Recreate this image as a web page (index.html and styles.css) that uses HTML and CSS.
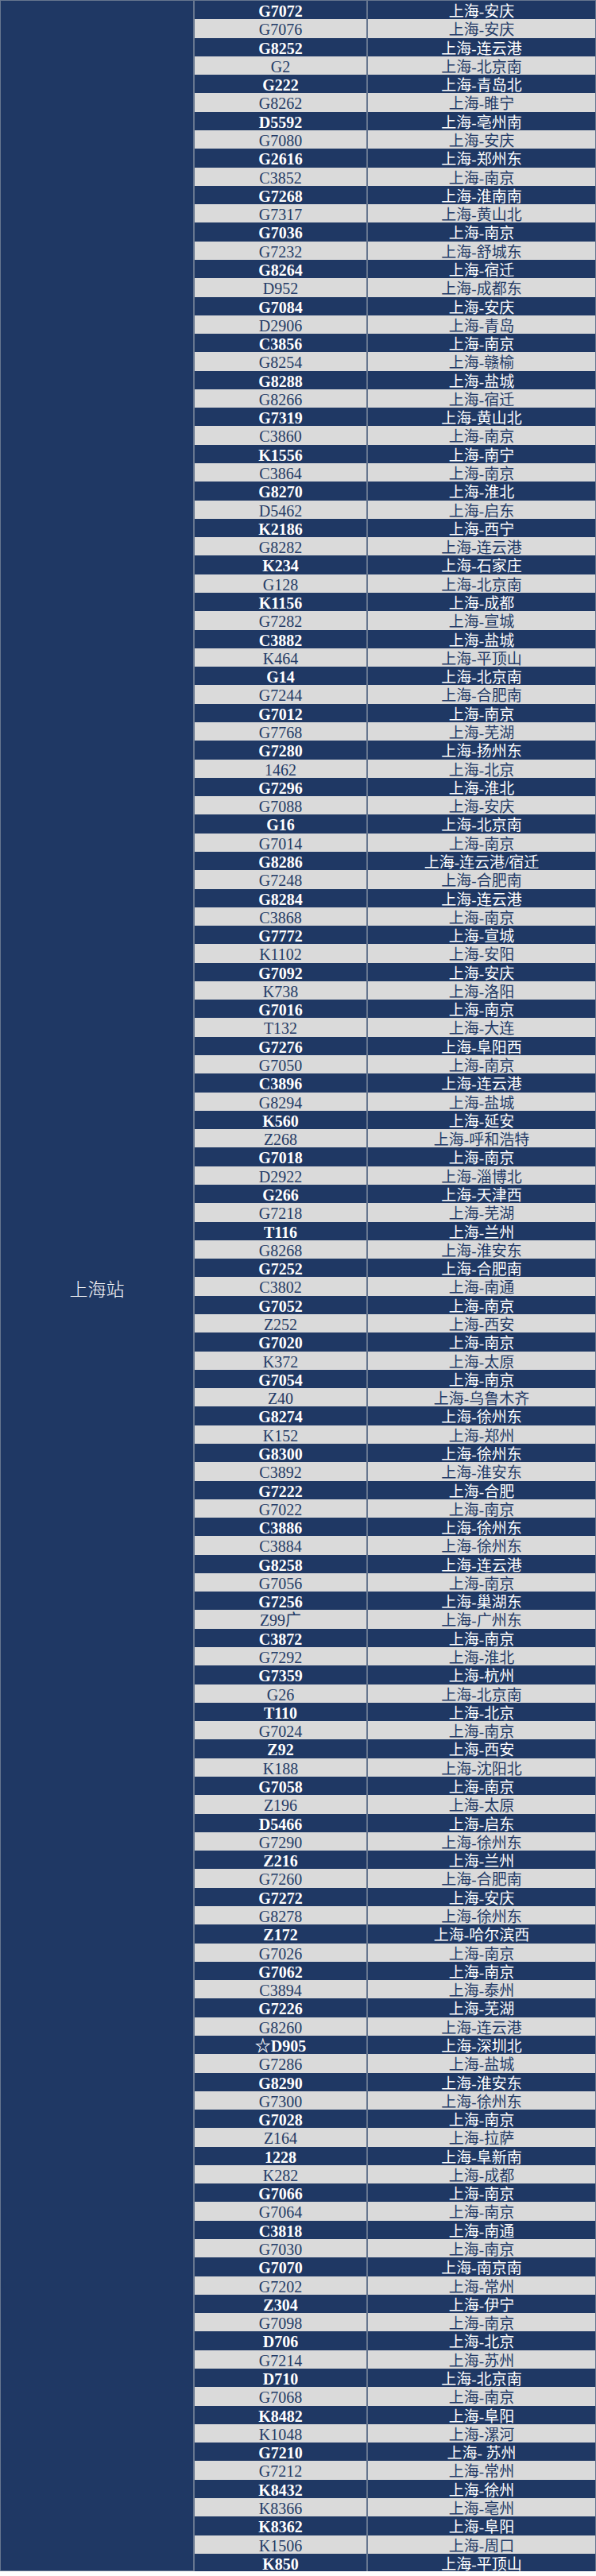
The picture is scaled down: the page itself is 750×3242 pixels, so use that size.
FILE: index.html
```html
<!DOCTYPE html>
<html lang="zh-CN">
<head>
<meta charset="utf-8">
<title>上海站</title>
<link rel="stylesheet" href="styles.css">
</head>
<body>
<div class="table">
  <div class="station">上海站</div>
  <div class="list">
    <div class="row dark"><div class="no">G7072</div><div class="route">上海-安庆</div></div>
    <div class="row light"><div class="no">G7076</div><div class="route">上海-安庆</div></div>
    <div class="row dark"><div class="no">G8252</div><div class="route">上海-连云港</div></div>
    <div class="row light"><div class="no">G2</div><div class="route">上海-北京南</div></div>
    <div class="row dark"><div class="no">G222</div><div class="route">上海-青岛北</div></div>
    <div class="row light"><div class="no">G8262</div><div class="route">上海-睢宁</div></div>
    <div class="row dark"><div class="no">D5592</div><div class="route">上海-亳州南</div></div>
    <div class="row light"><div class="no">G7080</div><div class="route">上海-安庆</div></div>
    <div class="row dark"><div class="no">G2616</div><div class="route">上海-郑州东</div></div>
    <div class="row light"><div class="no">C3852</div><div class="route">上海-南京</div></div>
    <div class="row dark"><div class="no">G7268</div><div class="route">上海-淮南南</div></div>
    <div class="row light"><div class="no">G7317</div><div class="route">上海-黄山北</div></div>
    <div class="row dark"><div class="no">G7036</div><div class="route">上海-南京</div></div>
    <div class="row light"><div class="no">G7232</div><div class="route">上海-舒城东</div></div>
    <div class="row dark"><div class="no">G8264</div><div class="route">上海-宿迁</div></div>
    <div class="row light"><div class="no">D952</div><div class="route">上海-成都东</div></div>
    <div class="row dark"><div class="no">G7084</div><div class="route">上海-安庆</div></div>
    <div class="row light"><div class="no">D2906</div><div class="route">上海-青岛</div></div>
    <div class="row dark"><div class="no">C3856</div><div class="route">上海-南京</div></div>
    <div class="row light"><div class="no">G8254</div><div class="route">上海-赣榆</div></div>
    <div class="row dark"><div class="no">G8288</div><div class="route">上海-盐城</div></div>
    <div class="row light"><div class="no">G8266</div><div class="route">上海-宿迁</div></div>
    <div class="row dark"><div class="no">G7319</div><div class="route">上海-黄山北</div></div>
    <div class="row light"><div class="no">C3860</div><div class="route">上海-南京</div></div>
    <div class="row dark"><div class="no">K1556</div><div class="route">上海-南宁</div></div>
    <div class="row light"><div class="no">C3864</div><div class="route">上海-南京</div></div>
    <div class="row dark"><div class="no">G8270</div><div class="route">上海-淮北</div></div>
    <div class="row light"><div class="no">D5462</div><div class="route">上海-启东</div></div>
    <div class="row dark"><div class="no">K2186</div><div class="route">上海-西宁</div></div>
    <div class="row light"><div class="no">G8282</div><div class="route">上海-连云港</div></div>
    <div class="row dark"><div class="no">K234</div><div class="route">上海-石家庄</div></div>
    <div class="row light"><div class="no">G128</div><div class="route">上海-北京南</div></div>
    <div class="row dark"><div class="no">K1156</div><div class="route">上海-成都</div></div>
    <div class="row light"><div class="no">G7282</div><div class="route">上海-宣城</div></div>
    <div class="row dark"><div class="no">C3882</div><div class="route">上海-盐城</div></div>
    <div class="row light"><div class="no">K464</div><div class="route">上海-平顶山</div></div>
    <div class="row dark"><div class="no">G14</div><div class="route">上海-北京南</div></div>
    <div class="row light"><div class="no">G7244</div><div class="route">上海-合肥南</div></div>
    <div class="row dark"><div class="no">G7012</div><div class="route">上海-南京</div></div>
    <div class="row light"><div class="no">G7768</div><div class="route">上海-芜湖</div></div>
    <div class="row dark"><div class="no">G7280</div><div class="route">上海-扬州东</div></div>
    <div class="row light"><div class="no">1462</div><div class="route">上海-北京</div></div>
    <div class="row dark"><div class="no">G7296</div><div class="route">上海-淮北</div></div>
    <div class="row light"><div class="no">G7088</div><div class="route">上海-安庆</div></div>
    <div class="row dark"><div class="no">G16</div><div class="route">上海-北京南</div></div>
    <div class="row light"><div class="no">G7014</div><div class="route">上海-南京</div></div>
    <div class="row dark"><div class="no">G8286</div><div class="route">上海-连云港/宿迁</div></div>
    <div class="row light"><div class="no">G7248</div><div class="route">上海-合肥南</div></div>
    <div class="row dark"><div class="no">G8284</div><div class="route">上海-连云港</div></div>
    <div class="row light"><div class="no">C3868</div><div class="route">上海-南京</div></div>
    <div class="row dark"><div class="no">G7772</div><div class="route">上海-宣城</div></div>
    <div class="row light"><div class="no">K1102</div><div class="route">上海-安阳</div></div>
    <div class="row dark"><div class="no">G7092</div><div class="route">上海-安庆</div></div>
    <div class="row light"><div class="no">K738</div><div class="route">上海-洛阳</div></div>
    <div class="row dark"><div class="no">G7016</div><div class="route">上海-南京</div></div>
    <div class="row light"><div class="no">T132</div><div class="route">上海-大连</div></div>
    <div class="row dark"><div class="no">G7276</div><div class="route">上海-阜阳西</div></div>
    <div class="row light"><div class="no">G7050</div><div class="route">上海-南京</div></div>
    <div class="row dark"><div class="no">C3896</div><div class="route">上海-连云港</div></div>
    <div class="row light"><div class="no">G8294</div><div class="route">上海-盐城</div></div>
    <div class="row dark"><div class="no">K560</div><div class="route">上海-延安</div></div>
    <div class="row light"><div class="no">Z268</div><div class="route">上海-呼和浩特</div></div>
    <div class="row dark"><div class="no">G7018</div><div class="route">上海-南京</div></div>
    <div class="row light"><div class="no">D2922</div><div class="route">上海-淄博北</div></div>
    <div class="row dark"><div class="no">G266</div><div class="route">上海-天津西</div></div>
    <div class="row light"><div class="no">G7218</div><div class="route">上海-芜湖</div></div>
    <div class="row dark"><div class="no">T116</div><div class="route">上海-兰州</div></div>
    <div class="row light"><div class="no">G8268</div><div class="route">上海-淮安东</div></div>
    <div class="row dark"><div class="no">G7252</div><div class="route">上海-合肥南</div></div>
    <div class="row light"><div class="no">C3802</div><div class="route">上海-南通</div></div>
    <div class="row dark"><div class="no">G7052</div><div class="route">上海-南京</div></div>
    <div class="row light"><div class="no">Z252</div><div class="route">上海-西安</div></div>
    <div class="row dark"><div class="no">G7020</div><div class="route">上海-南京</div></div>
    <div class="row light"><div class="no">K372</div><div class="route">上海-太原</div></div>
    <div class="row dark"><div class="no">G7054</div><div class="route">上海-南京</div></div>
    <div class="row light"><div class="no">Z40</div><div class="route">上海-乌鲁木齐</div></div>
    <div class="row dark"><div class="no">G8274</div><div class="route">上海-徐州东</div></div>
    <div class="row light"><div class="no">K152</div><div class="route">上海-郑州</div></div>
    <div class="row dark"><div class="no">G8300</div><div class="route">上海-徐州东</div></div>
    <div class="row light"><div class="no">C3892</div><div class="route">上海-淮安东</div></div>
    <div class="row dark"><div class="no">G7222</div><div class="route">上海-合肥</div></div>
    <div class="row light"><div class="no">G7022</div><div class="route">上海-南京</div></div>
    <div class="row dark"><div class="no">C3886</div><div class="route">上海-徐州东</div></div>
    <div class="row light"><div class="no">C3884</div><div class="route">上海-徐州东</div></div>
    <div class="row dark"><div class="no">G8258</div><div class="route">上海-连云港</div></div>
    <div class="row light"><div class="no">G7056</div><div class="route">上海-南京</div></div>
    <div class="row dark"><div class="no">G7256</div><div class="route">上海-巢湖东</div></div>
    <div class="row light"><div class="no">Z99广</div><div class="route">上海-广州东</div></div>
    <div class="row dark"><div class="no">C3872</div><div class="route">上海-南京</div></div>
    <div class="row light"><div class="no">G7292</div><div class="route">上海-淮北</div></div>
    <div class="row dark"><div class="no">G7359</div><div class="route">上海-杭州</div></div>
    <div class="row light"><div class="no">G26</div><div class="route">上海-北京南</div></div>
    <div class="row dark"><div class="no">T110</div><div class="route">上海-北京</div></div>
    <div class="row light"><div class="no">G7024</div><div class="route">上海-南京</div></div>
    <div class="row dark"><div class="no">Z92</div><div class="route">上海-西安</div></div>
    <div class="row light"><div class="no">K188</div><div class="route">上海-沈阳北</div></div>
    <div class="row dark"><div class="no">G7058</div><div class="route">上海-南京</div></div>
    <div class="row light"><div class="no">Z196</div><div class="route">上海-太原</div></div>
    <div class="row dark"><div class="no">D5466</div><div class="route">上海-启东</div></div>
    <div class="row light"><div class="no">G7290</div><div class="route">上海-徐州东</div></div>
    <div class="row dark"><div class="no">Z216</div><div class="route">上海-兰州</div></div>
    <div class="row light"><div class="no">G7260</div><div class="route">上海-合肥南</div></div>
    <div class="row dark"><div class="no">G7272</div><div class="route">上海-安庆</div></div>
    <div class="row light"><div class="no">G8278</div><div class="route">上海-徐州东</div></div>
    <div class="row dark"><div class="no">Z172</div><div class="route">上海-哈尔滨西</div></div>
    <div class="row light"><div class="no">G7026</div><div class="route">上海-南京</div></div>
    <div class="row dark"><div class="no">G7062</div><div class="route">上海-南京</div></div>
    <div class="row light"><div class="no">C3894</div><div class="route">上海-泰州</div></div>
    <div class="row dark"><div class="no">G7226</div><div class="route">上海-芜湖</div></div>
    <div class="row light"><div class="no">G8260</div><div class="route">上海-连云港</div></div>
    <div class="row dark"><div class="no">☆D905</div><div class="route">上海-深圳北</div></div>
    <div class="row light"><div class="no">G7286</div><div class="route">上海-盐城</div></div>
    <div class="row dark"><div class="no">G8290</div><div class="route">上海-淮安东</div></div>
    <div class="row light"><div class="no">G7300</div><div class="route">上海-徐州东</div></div>
    <div class="row dark"><div class="no">G7028</div><div class="route">上海-南京</div></div>
    <div class="row light"><div class="no">Z164</div><div class="route">上海-拉萨</div></div>
    <div class="row dark"><div class="no">1228</div><div class="route">上海-阜新南</div></div>
    <div class="row light"><div class="no">K282</div><div class="route">上海-成都</div></div>
    <div class="row dark"><div class="no">G7066</div><div class="route">上海-南京</div></div>
    <div class="row light"><div class="no">G7064</div><div class="route">上海-南京</div></div>
    <div class="row dark"><div class="no">C3818</div><div class="route">上海-南通</div></div>
    <div class="row light"><div class="no">G7030</div><div class="route">上海-南京</div></div>
    <div class="row dark"><div class="no">G7070</div><div class="route">上海-南京南</div></div>
    <div class="row light"><div class="no">G7202</div><div class="route">上海-常州</div></div>
    <div class="row dark"><div class="no">Z304</div><div class="route">上海-伊宁</div></div>
    <div class="row light"><div class="no">G7098</div><div class="route">上海-南京</div></div>
    <div class="row dark"><div class="no">D706</div><div class="route">上海-北京</div></div>
    <div class="row light"><div class="no">G7214</div><div class="route">上海-苏州</div></div>
    <div class="row dark"><div class="no">D710</div><div class="route">上海-北京南</div></div>
    <div class="row light"><div class="no">G7068</div><div class="route">上海-南京</div></div>
    <div class="row dark"><div class="no">K8482</div><div class="route">上海-阜阳</div></div>
    <div class="row light"><div class="no">K1048</div><div class="route">上海-漯河</div></div>
    <div class="row dark"><div class="no">G7210</div><div class="route">上海- 苏州</div></div>
    <div class="row light"><div class="no">G7212</div><div class="route">上海-常州</div></div>
    <div class="row dark"><div class="no">K8432</div><div class="route">上海-徐州</div></div>
    <div class="row light"><div class="no">K8366</div><div class="route">上海-亳州</div></div>
    <div class="row dark"><div class="no">K8362</div><div class="route">上海-阜阳</div></div>
    <div class="row light"><div class="no">K1506</div><div class="route">上海-周口</div></div>
    <div class="row dark"><div class="no">K850</div><div class="route">上海-平顶山</div></div>
  </div>
</div>
</body>
</html>
```

FILE: styles.css
```css
html, body {
  margin: 0;
  padding: 0;
  background: #ffffff;
}

.table {
  display: flex;
  gap: 2px;
  padding: 1px;
  width: 750px;
  box-sizing: border-box;
  background: #66768f;
}

.station {
  width: 242px;
  flex: none;
  background: #1f3864;
  color: #ffffff;
  display: flex;
  align-items: center;
  justify-content: center;
  padding-top: 6px;
  box-sizing: border-box;
  font-family: "Noto Sans CJK SC", sans-serif;
  font-size: 23px;
  font-weight: 300;
}

.list {
  flex: 1;
  display: flex;
  flex-direction: column;
  gap: 1.7px;
}

.row {
  display: grid;
  grid-template-columns: 216px 1fr;
  column-gap: 2px;
  height: 21.6px;
}

.row > div {
  text-align: center;
  line-height: 21.6px;
  padding-top: 3px;
  box-sizing: border-box;
  white-space: nowrap;
  overflow: visible;
  font-family: "Liberation Serif", "Noto Sans CJK SC", serif;
}

.no {
  font-size: 20px;
}

.route {
  font-size: 19px;
}

.dark > div {
  background: #1f3864;
  color: #ffffff;
}

.dark .no {
  font-weight: bold;
}

.light > div {
  background: #dadada;
  color: #233a66;
}
```
